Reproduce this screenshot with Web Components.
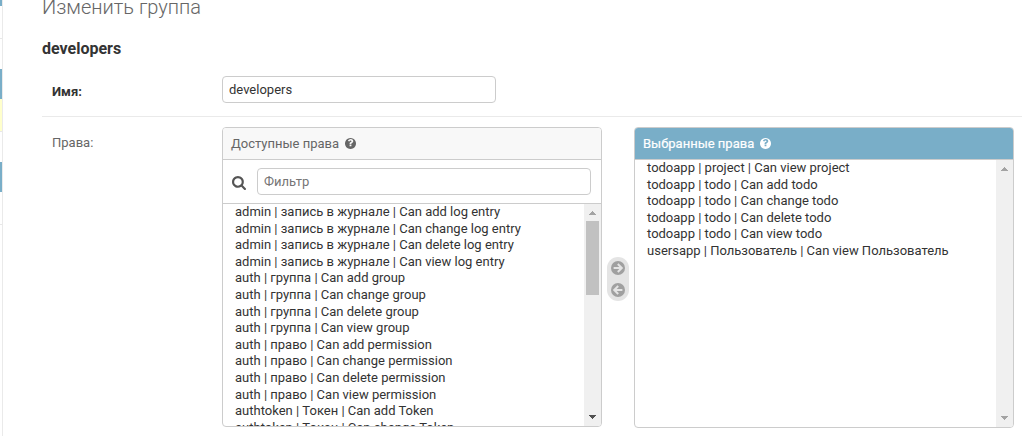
<!DOCTYPE html>
<html lang="ru">
<head>
<meta charset="utf-8">
<title>Изменить группа</title>
<style>
html,body{margin:0;height:100%;overflow:hidden;background:#fff}
body{font-family:Roboto,"Liberation Sans",sans-serif;font-size:13px;color:#333}
</style>
</head>
<body>
<admin-page>
  <nav-edge slot="nav"></nav-edge>
  <h1 slot="title">Изменить группа</h1>
  <h2 slot="name">developers</h2>
  <form-row label="Имя:" required><text-field value="developers"></text-field></form-row>
  <form-row label="Права:">
    <filter-selector>
      <perm-box slot="available" heading="Доступные права" filter="Фильтр" scrollable></perm-box>
      <perm-box slot="chosen" heading="Выбранные права" chosen></perm-box>
    </filter-selector>
  </form-row>
</admin-page>
<script>
const define = (name, html, init) => customElements.define(name, class extends HTMLElement {
  constructor() {
    super();
    this.attachShadow({ mode: 'open' }).innerHTML = '<style>*{box-sizing:border-box}</style>' + html;
  }
  connectedCallback() { if (init) init(this, this.shadowRoot); }
});

define('nav-edge', `<style>
:host{display:flex;flex-direction:column;width:3px;height:436px;border-right:1px solid #eaeaea;box-sizing:border-box;flex:none}
i{display:block;width:2px;flex:none}
.c{background:#79aec8;height:30px}.w{border-bottom:1px solid #e8e8e8}.y{background:#ffc}
</style>
<i class="c" style="height:6px"></i><i class="w" style="height:33px"></i><i style="height:30px"></i>
<i class="c"></i><i class="w y" style="height:33px"></i><i style="height:30px"></i>
<i class="c"></i><i class="w" style="height:33px"></i>`);

define('admin-page', `<style>
:host{display:flex;height:436px;overflow:hidden}
main{flex:1;min-width:0;padding-left:39px;display:flex;flex-direction:column}
::slotted(h1){margin:-5px 0 0!important;font-size:20px;font-weight:300;line-height:24px;color:#666;flex:none}
::slotted(h2){margin:20px 0 -1px!important;font-size:16px;font-weight:700;line-height:20px;color:#333;flex:none}
</style><slot name="nav"></slot><main><slot name="title"></slot><slot name="name"></slot><slot></slot></main>`);

define('form-row', `<style>
:host{display:flex;padding:10px 8px 10px 10px;flex:none}
:host([required]){padding-top:18px;padding-bottom:13px;border-bottom:1px solid #eaeaea}
label{width:170px;flex:none;line-height:15px;padding-top:8px;color:#666}
:host([required]) label{font-weight:700;color:#333}
</style><label></label><slot></slot>`, (el, r) => r.querySelector('label').textContent = el.getAttribute('label'));

define('text-field', `<style>
:host{display:block;width:274px;height:27px}
input{display:block;width:100%;height:100%;margin:0;padding:0 6px;border:1px solid #ccc;border-radius:4px;font:13px Roboto,sans-serif;color:#333;background:#fff;outline:0}
input::placeholder{color:#757575}
</style><input type="text">`, (el, r) => {
  const i = r.querySelector('input');
  i.value = el.getAttribute('value') || '';
  i.placeholder = el.getAttribute('placeholder') || '';
});

define('help-icon', `<style>:host{display:block;width:11px;height:11px}svg{display:block}</style>
<svg width="11" height="11" viewBox="0 256 1536 1536"><path fill="currentColor" d="M896 1376v-192q0-14-9-23t-23-9H672q-14 0-23 9t-9 23v192q0 14 9 23t23 9h192q14 0 23-9t9-23zm256-672q0-88-55.500-163t-138.500-116-170-41q-243 0-371 213-15 24 8 42l132 100q7 6 19 6 16 0 25-12 53-68 86-92 34-24 86-24 48 0 85.500 26t37.500 59q0 38-20 61t-68 45q-63 28-115.500 86.500T640 1020v36q0 14 9 23t23 9h192q14 0 23-9t9-23q0-19 21.500-49.500T972 957q32-18 49-28.500t46-35 44.500-48 28-60.500 12.500-81zm384 320q0 209-103 385.500T1153.500 1689 768 1792t-385.500-103T103 1409.500 0 1024t103-385.500T382.500 359 768 256t385.500 103T1433 638.500 1536 1024z"/></svg>`);

define('search-icon', `<style>:host{display:block;width:14px;height:14px}svg{display:block}</style>
<svg width="14" height="14" viewBox="0 0 1664 1664"><path fill="#555" d="M1152 704q0-185-131.500-316.500T704 256 387.500 387.500 256 704t131.500 316.500T704 1152t316.500-131.500T1152 704zm512 832q0 52-38 90t-90 38q-54 0-90-38l-343-342q-179 124-399 124-143 0-273.500-55.500t-225-150-150-225T0 704t55.500-273.500 150-225 225-150T704 0t273.500 55.500 225 150 150 225T1408 704q0 220-124 399l343 343q37 37 37 90z"/></svg>`);

define('move-button', `<style>:host{display:block;width:14px;height:14px}:host([back]) svg{transform:scaleX(-1)}svg{display:block}</style>
<svg width="14" height="14" viewBox="0 0 14 14"><circle cx="7" cy="7" r="7" fill="#a0a0a0"/><path d="M2.600 7H10.500M6.800 3L10.800 7L6.800 11" fill="none" stroke="#e4e4e4" stroke-width="2"/></svg>`);

define('scroll-bar', `<style>
:host{display:flex;flex-direction:column;align-items:center;width:17px;background:#f0f0f0;flex:none}
svg{display:block;flex:none}.thumb{flex:1;width:13px}.thumb i{display:none;height:74px;background:#c1c1c1}
:host([active]) .thumb i{display:block}
path{fill:#a3a3a3}:host([active]) .down path{fill:#505050}
</style>
<svg width="17" height="17" viewBox="0 0 17 17" shape-rendering="crispEdges"><path d="M5 11V10H6V9H7V8H8V7H9V8H10V9H11V10H12V11Z"/></svg>
<div class="thumb"><i></i></div>
<svg class="down" width="17" height="17" viewBox="0 0 17 17" shape-rendering="crispEdges"><path d="M5 6H12V7H11V8H10V9H9V10H8V9H7V8H6V7H5Z"/></svg>`);

define('perm-option', `<style>:host{display:block;height:16.6px;line-height:15.6px;white-space:nowrap;flex:none}</style><slot></slot>`);

define('perm-box', `<style>
:host{display:flex;flex-direction:column;width:380px;height:300px;border:1px solid #ccc;border-radius:4px;overflow:hidden;box-sizing:border-box;background:#fff;flex:none}
:host([chosen]){height:301px}
header{display:flex;align-items:center;gap:6px;height:32px;padding-left:8px;background:#f8f8f8;color:#666;border-bottom:1px solid #ccc;flex:none;line-height:15px}
:host([chosen]) header{background:#79aec8;color:#fff;-webkit-text-stroke:.2px #fff}
.filter{display:flex;align-items:center;height:44px;padding:0 10px 0 9px;gap:11px;border-bottom:1px solid #ccc;flex:none}
search-icon{margin-top:3px}
text-field{flex:1}
.body{display:flex;flex:1;min-height:0}
.list{flex:1;min-width:0;overflow:hidden;padding-left:12px;color:#333}
</style><header><span></span><help-icon></help-icon></header><div class="filter"><search-icon></search-icon><text-field></text-field></div>
<div class="body"><div class="list"></div><scroll-bar></scroll-bar></div>`, (el, r) => {
  r.querySelector('span').textContent = el.getAttribute('heading');
  if (el.hasAttribute('filter')) {
    const f = r.querySelector('text-field');
    f.shadowRoot.querySelector('input').placeholder = el.getAttribute('filter');
    f.setAttribute('placeholder', el.getAttribute('filter'));
  } else r.querySelector('.filter').remove();
  if (el.hasAttribute('scrollable')) r.querySelector('scroll-bar').setAttribute('active', '');
  const verbs = (model, name) => ['add', 'change', 'delete', 'view'].map(v => model + ' | Can ' + v + ' ' + name);
  const rows = el.hasAttribute('chosen')
    ? ['todoapp | project | Can view project', ...verbs('todoapp | todo', 'todo'), 'usersapp | Пользователь | Can view Пользователь']
    : [...verbs('admin | запись в журнале', 'log entry'), ...verbs('auth | группа', 'group'), ...verbs('auth | право', 'permission'), ...verbs('authtoken | Токен', 'Token').slice(0, 2)];
  for (const t of rows) {
    const o = document.createElement('perm-option');
    o.textContent = t;
    r.querySelector('.list').append(o);
  }
});

define('filter-selector', `<style>
:host{display:flex;align-items:flex-start}
.chooser{display:flex;flex-direction:column;justify-content:space-between;width:22px;height:44px;margin:130px 5px 0;padding:4px;border-radius:11px;background:#e4e4e4}
</style><slot name="available"></slot><div class="chooser"><move-button></move-button><move-button back></move-button></div><slot name="chosen"></slot>`);
</script>
</body>
</html>
